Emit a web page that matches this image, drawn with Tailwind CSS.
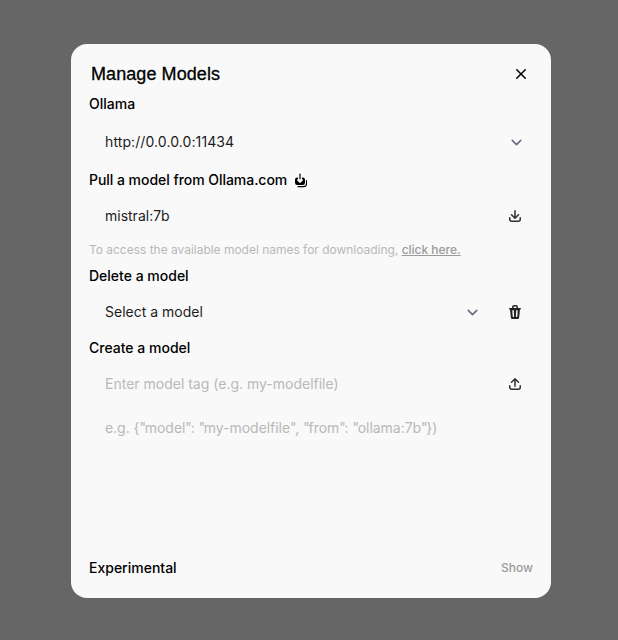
<!DOCTYPE html>
<html lang="en">
<head>
<meta charset="utf-8">
<title>Manage Models</title>
<script src="https://cdn.jsdelivr.net/npm/@tailwindcss/browser@4"></script>
</head>
<body class="h-[640px] bg-[#666666] flex justify-center pt-11 pr-0 pl-1 overflow-hidden font-['Inter',sans-serif]">
<main class="w-[480px] h-[554px] rounded-2xl bg-[#f9f9f9] px-[18px] flex flex-col text-sm text-black">
  <header class="flex justify-between items-center h-[50px] pt-[10px] pl-0.5 pr-[5px]">
    <h1 class="text-lg leading-7 tracking-[0.08px] [-webkit-text-stroke:0.3px_black] font-['Liberation_Sans',sans-serif]">Manage Models</h1>
    <svg class="size-5 -mr-[3px]" viewBox="0 0 20 20" fill="currentColor"><path d="M6.28 5.22a.75.75 0 00-1.06 1.06L8.94 10l-3.72 3.72a.75.75 0 101.06 1.06L10 11.06l3.72 3.72a.75.75 0 101.06-1.06L11.06 10l3.72-3.72a.75.75 0 00-1.06-1.06L10 8.94 6.28 5.22z"/></svg>
  </header>
  <h2 class="font-medium">Ollama</h2>
  <div class="h-9 pl-4 pr-2 flex items-center justify-between mt-[10px] text-[#1c1c1c]">
    <span class="tracking-[0.1px]">http://0.0.0.0:11434</span>
    <svg class="size-[17px] text-gray-500" viewBox="0 0 20 20" fill="none" stroke="currentColor" stroke-width="2" stroke-linecap="round" stroke-linejoin="round"><path d="M5 7.5l5 5 5-5"/></svg>
  </div>
  <h2 class="font-medium mt-[10px] flex items-center gap-[7px]"><span class="tracking-[-0.04px]">Pull a model from Ollama.com</span>
    <svg class="w-[14px] h-[15px]" viewBox="0 0 14 15" fill="currentColor"><path d="M4 4.5h-.8A2.2 2.2 0 001 6.7v3.1A2.2 2.2 0 003.2 12h5.6A2.2 2.2 0 0011 9.8V6.7a2.2 2.2 0 00-2.2-2.2H8v2.2L6 8.7l-2-2z"/><path d="M6 5v4.2M3.6 7L6 9.4 8.4 7" fill="none" stroke="#f9f9f9" stroke-width="1.2" stroke-linecap="round" stroke-linejoin="round"/><path d="M6 1.2v4.6" fill="none" stroke="currentColor" stroke-width="1.2" stroke-linecap="round"/><path d="M12.5 7.5v3.3a2.8 2.8 0 01-2.8 2.8H4" fill="none" stroke="currentColor" stroke-width="1.1" stroke-linecap="round"/></svg>
  </h2>
  <div class="mt-2 h-9 pl-4 pr-[10px] flex items-center justify-between text-[#1c1c1c]">
    <span>mistral:7b</span>
    <svg class="size-4 text-[#303030]" viewBox="0 0 16 16" fill="currentColor"><path d="M8.75 2.75a.75.75 0 00-1.5 0v5.69L5.03 6.22a.75.75 0 00-1.06 1.06l3.5 3.5a.75.75 0 001.06 0l3.5-3.5a.75.75 0 00-1.06-1.06L8.75 8.44V2.75z"/><path d="M3.5 9.75a.75.75 0 00-1.5 0v1.5A2.75 2.75 0 004.75 14h6.5A2.75 2.75 0 0014 11.25v-1.5a.75.75 0 00-1.5 0v1.5c0 .69-.56 1.25-1.25 1.25h-6.5c-.69 0-1.25-.56-1.25-1.25v-1.5z"/></svg>
  </div>
  <p class="mt-2 text-xs tracking-[-0.02px] text-[#b8b8b8]">To access the available model names for downloading, <a class="font-medium underline text-[#9b9b9b]">click here.</a></p>
  <h2 class="font-medium mt-2">Delete a model</h2>
  <div class="mt-2 h-9 pl-4 pr-[10px] flex items-center text-[#1c1c1c]">
    <span class="grow">Select a model</span>
    <svg class="size-[17px] mr-[26px] text-gray-500" viewBox="0 0 20 20" fill="none" stroke="currentColor" stroke-width="2" stroke-linecap="round" stroke-linejoin="round"><path d="M5 7.5l5 5 5-5"/></svg>
    <svg class="size-4 text-[#202020]" viewBox="0 0 16 16" fill="currentColor"><path fill-rule="evenodd" clip-rule="evenodd" d="M5 3.25V4H2.75a.75.75 0 000 1.5h.3l.815 8.15A1.5 1.5 0 005.357 15h5.285a1.5 1.5 0 001.493-1.35l.815-8.15h.3a.75.75 0 000-1.5H11v-.75A2.25 2.25 0 008.75 1h-1.5A2.25 2.25 0 005 3.25zm2.25-.75a.75.75 0 00-.75.75V4h3v-.75a.75.75 0 00-.75-.75h-1.5zM6.05 6a.75.75 0 01.787.713l.275 5.5a.75.75 0 01-1.498.075l-.275-5.5A.75.75 0 016.05 6zm3.9 0a.75.75 0 01.712.787l-.275 5.5a.75.75 0 01-1.498-.075l.275-5.5a.75.75 0 01.786-.711z"/></svg>
  </div>
  <h2 class="font-medium mt-2">Create a model</h2>
  <div class="mt-2 h-9 pl-4 pr-[10px] flex items-center justify-between">
    <span class="text-[#b8b8b8]">Enter model tag (e.g. my-modelfile)</span>
    <svg class="size-4 text-[#303030]" viewBox="0 0 16 16" fill="currentColor"><path d="M7.25 10.25a.75.75 0 001.5 0V4.56l2.22 2.22a.75.75 0 101.06-1.06l-3.5-3.5a.75.75 0 00-1.06 0l-3.5 3.5a.75.75 0 001.06 1.06l2.22-2.22v5.69z"/><path d="M3.5 9.75a.75.75 0 00-1.5 0v1.5A2.75 2.75 0 004.75 14h6.5A2.75 2.75 0 0014 11.25v-1.5a.75.75 0 00-1.5 0v1.5c0 .69-.56 1.25-1.25 1.25h-6.5c-.69 0-1.25-.56-1.25-1.25v-1.5z"/></svg>
  </div>
  <div class="mt-4 pl-4 text-[#b8b8b8] tracking-[-0.04px]">e.g. {<span class="tracking-[-1.25px]">"</span>model<span class="tracking-[-1.25px]">"</span>: <span class="tracking-[-1.25px]">"</span>my-modelfile<span class="tracking-[-1.25px]">"</span>, <span class="tracking-[-1.25px]">"</span>from<span class="tracking-[-1.25px]">"</span>: <span class="tracking-[-1.25px]">"</span>ollama:7b<span class="tracking-[-1.25px]">"</span>})</div>
  <footer class="mt-auto mb-5 flex justify-between items-center">
    <h2 class="font-medium">Experimental</h2>
    <button class="text-xs font-medium text-[#9b9b9b]">Show</button>
  </footer>
</main>
</body>
</html>
